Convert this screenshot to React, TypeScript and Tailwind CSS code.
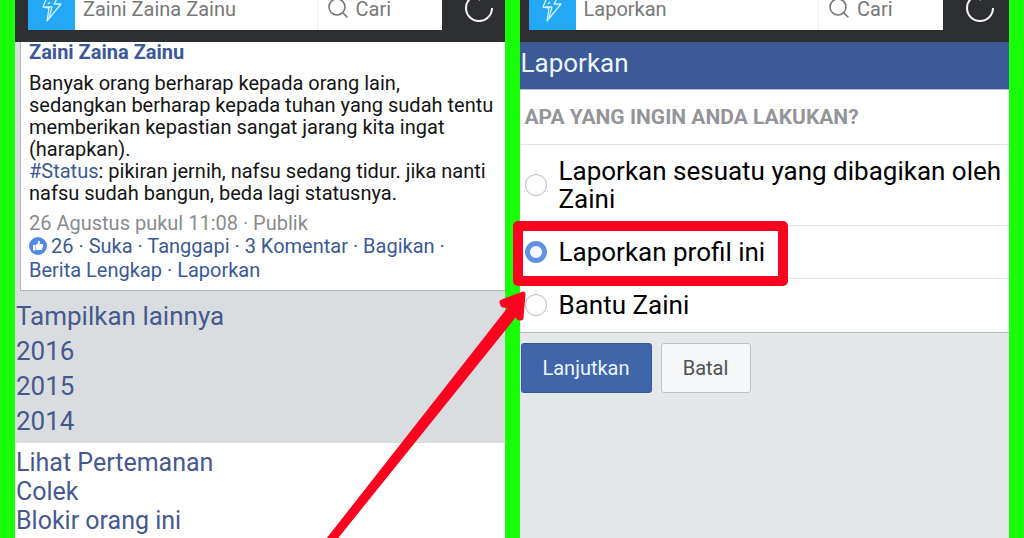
import { useState } from "react";
import { Search } from "lucide-react";
import clsx from "clsx";

const YEARS = ["2016", "2015", "2014"];
const PROFILE_LINKS = ["Lihat Pertemanan", "Colek", "Blokir orang ini"];

const REPORT_OPTIONS = [
  { id: "shared", label: "Laporkan sesuatu yang dibagikan oleh Zaini" },
  { id: "profile", label: "Laporkan profil ini" },
  { id: "help", label: "Bantu Zaini" },
];

function BrowserBar({ title, className }: { title: string; className?: string }) {
  return (
    <header className={clsx("flex h-[42px] items-start bg-[#2d2e32]", className)}>
      <div className="flex h-[30px] min-w-0 flex-1 bg-white text-[20px] leading-[18px] text-[#77787a]">
        <div className="flex w-[47px] shrink-0 justify-center bg-[#23a8f5]">
          <svg className="h-[22px] w-6" viewBox="0 0 24 22" fill="none" stroke="#d5f1ff" strokeWidth="1.3" strokeLinejoin="round">
            <path d="M8 -5 L3 7 L9 8 L7 21 L21 4 L14 4 L18 -3 M5 7 L12 7 L9 18 M10 2 L8 4" />
          </svg>
        </div>
        <span className="flex-1 pl-2 whitespace-nowrap">{title}</span>
        <button type="button" className="flex w-[125px] gap-1 border-l border-[#f1f1f3] pl-2">
          <Search className="-mt-1 size-6 shrink-0" strokeWidth={1.6} />
          <span className="pl-0.5">Cari</span>
        </button>
      </div>
      <button type="button" aria-label="Muat ulang" className="flex w-[52px] justify-end">
        <svg className="h-6 w-[30px]" viewBox="0 0 30 24" fill="none" stroke="#f4f4f5" strokeWidth="2">
          <path d="M15 -5 A13 13 0 1 0 28 8" />
          <path d="M14 -2 L16 0" />
        </svg>
      </button>
    </header>
  );
}

function LikeBadge() {
  return (
    <svg className="mr-1 inline-block size-[18px] align-[-2px]" viewBox="0 0 18 18">
      <circle cx="9" cy="9" r="9" fill="#5389e6" />
      <path d="M4 8h2.5v5.5H4zM7 8l2-2.2V3.7c1.7-.3 2.4 1 1.6 3.3h2.5c1 0 1.2 1 .7 1.5.5.5.4 1.3-.2 1.6.4.6.1 1.2-.4 1.4.2.8-.2 1.5-1 1.5H8.500l-1.500-.6z" fill="#fff" />
    </svg>
  );
}

function Post() {
  return (
    <article className="ml-[5px] border-b border-l border-[#b4b7bc] bg-white px-2 pb-2 text-[20px] leading-[22px] text-[#141414]">
      <h2 className="leading-5 font-bold text-[#3b5998]">
        <a href="#profil">Zaini Zaina Zainu</a>
      </h2>
      <p className="pt-2.5">
        Banyak orang berharap kepada orang lain, sedangkan berharap kepada tuhan yang sudah tentu memberikan
        kepastian sangat jarang kita ingat (harapkan).
        <br />
        <a href="#status" className="text-[#3b5998]">#Status</a>: pikiran jernih, nafsu sedang tidur. jika nanti
        nafsu sudah bangun, beda lagi statusnya.
      </p>
      <p className="pt-2 text-[#898b8f]">26 Agustus pukul 11:08 · Publik</p>
      <p className="leading-6 text-[#3b5998]">
        <LikeBadge />
        <a href="#26">26</a> · <a href="#suka">Suka</a> · <a href="#tanggapi">Tanggapi</a> ·{" "}
        <a href="#komentar">3 Komentar</a> · <a href="#bagikan">Bagikan</a> ·
        <br />
        <a href="#berita">Berita Lengkap</a> · <a href="#laporkan">Laporkan</a>
      </p>
    </article>
  );
}

// red frame around the selected option, with the arrow leading to it
function Annotation() {
  return (
    <svg className="pointer-events-none absolute top-0 left-0 h-[538px] w-full overflow-visible" aria-hidden="true">
      <rect x="-2" y="226" width="265" height="55" fill="none" stroke="#fc0320" strokeWidth="10" strokeLinejoin="round" />
      <path
        d="M3 294 L-18 302 L-17 305 L-8 306 L-190 538 L-206 560 L-202 560 L-185 538 L-4 313 L-1 318 L1 318 Z"
        fill="#fc0320"
        stroke="#fc0320"
        strokeWidth="5"
        strokeLinejoin="round"
      />
    </svg>
  );
}

export default function App() {
  const [selected, setSelected] = useState("profile");

  return (
    <main className="grid min-h-screen grid-cols-2 gap-[15px] overflow-hidden bg-[#19ff08] px-[15px] font-['Roboto',sans-serif]">
      <section className="flex flex-col bg-[#d9dde0]">
        <BrowserBar title="Zaini Zaina Zainu" className="pr-[11px] pl-[13px]" />
        <Post />
        <nav className="flex flex-col pt-2 pb-1 pl-px text-[26px] leading-[35px] text-[#46598f]">
          <a href="#lainnya">Tampilkan lainnya</a>
          {YEARS.map((year) => (
            <a key={year} href={`#${year}`}>{year}</a>
          ))}
        </nav>
        <nav className="flex flex-1 flex-col bg-white pt-[5px] pl-px text-[25px] leading-[29px] text-[#46598f]">
          {PROFILE_LINKS.map((link) => (
            <a key={link} href="#profil">{link}</a>
          ))}
        </nav>
      </section>

      <section className="relative bg-[#e5e8e9]">
        <BrowserBar title="Laporkan" className="pr-[14px] pl-[9px]" />
        <h1 className="border-b border-[#b9bfd0] bg-[#3c5a96] pt-1.5 pb-2.5 pl-px text-[26px] leading-[31px] text-[#eaf6ff]">Laporkan</h1>
        <form>
          <fieldset className="border-b border-[#b4b7b9] bg-white">
            <legend className="float-left w-full border-b border-[#e3e5e8] py-4 pl-[5px] text-[21px] leading-[22px] font-bold text-[#939598]">
              APA YANG INGIN ANDA LAKUKAN?
            </legend>
            <div className="clear-both">
              {REPORT_OPTIONS.map((option) => (
                <label key={option.id} className="flex items-center gap-3 border-b border-[#e3e5e8] py-3 pl-[5px] text-[26px] leading-7 text-black last:border-transparent">
                  <input
                    type="radio"
                    name="report"
                    value={option.id}
                    checked={selected === option.id}
                    onChange={() => setSelected(option.id)}
                    className="size-[22px] shrink-0 appearance-none rounded-full border border-[#b9bbbd] bg-white checked:border-5 checked:border-[#6493e2] checked:bg-[#f2faff]"
                  />
                  {option.label}
                </label>
              ))}
            </div>
          </fieldset>
          <div className="flex gap-[9px] px-px py-2.5 text-[20px]">
            <button type="submit" className="h-[50px] w-[131px] rounded-[3px] border border-[#365899] bg-[#4065ab] text-[#eaf6ff]">
              Lanjutkan
            </button>
            <button type="button" className="h-[50px] w-[90px] rounded-[3px] border border-[#bfc1c3] bg-[#f6f7f8] text-[#4f5155]">
              Batal
            </button>
          </div>
        </form>
        <Annotation />
      </section>
    </main>
  );
}
